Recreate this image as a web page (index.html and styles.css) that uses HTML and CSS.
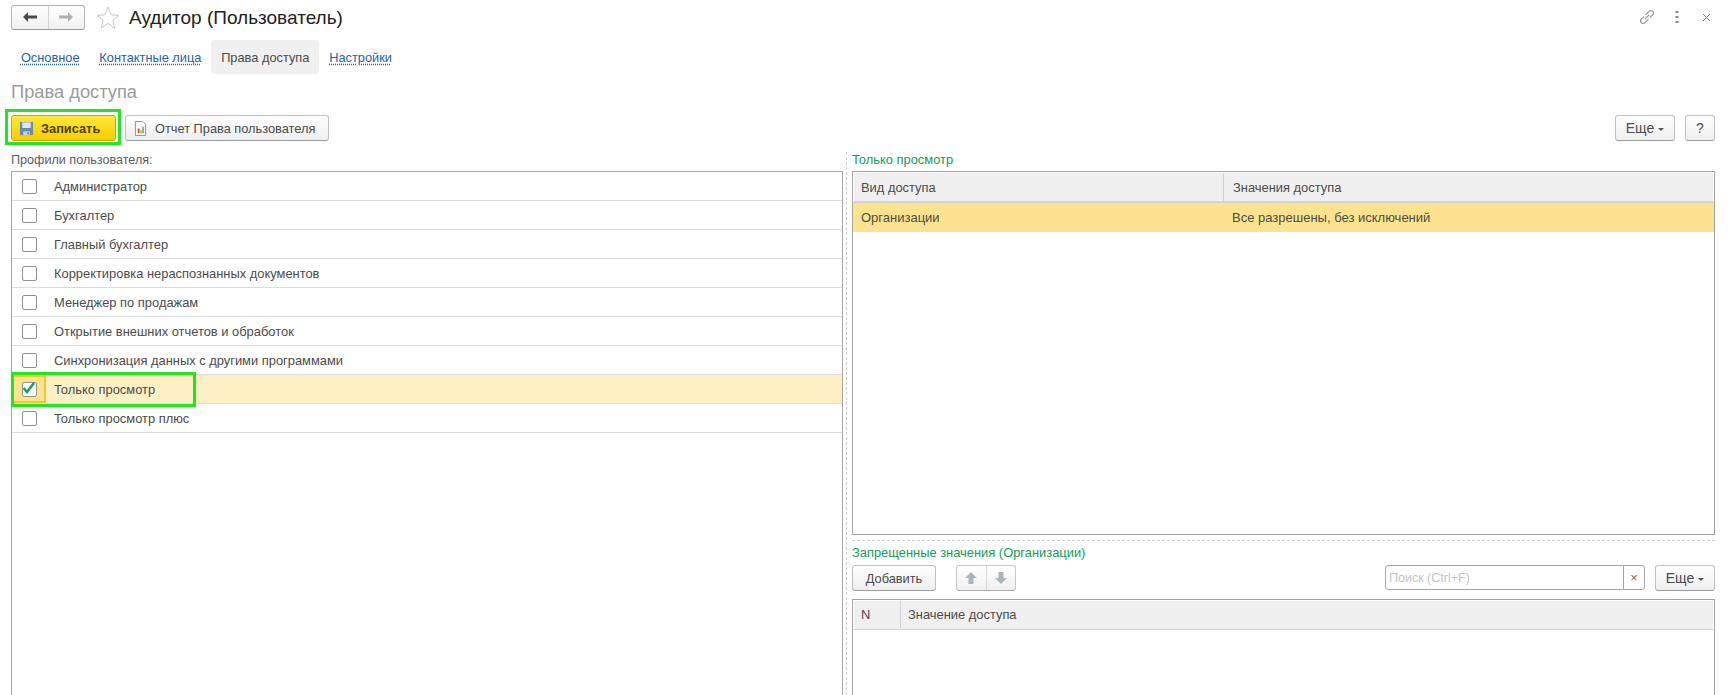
FILE: index.html
```html
<!DOCTYPE html>
<html lang="ru">
<head>
    <meta charset="UTF-8">
    <title>Аудитор (Пользователь)</title>
    <link rel="stylesheet" href="styles.css">
</head>
<body>
    <!-- Title bar -->
    <div class="titlebar">
        <div class="nav-group">
            <button class="nav-btn">
                <svg width="16" height="12" viewBox="0 0 16 12"><path d="M1 6l5-5v3.500h9v3H6V11z" fill="#4a4a4a"/></svg>
            </button>
            <button class="nav-btn">
                <svg width="16" height="12" viewBox="0 0 16 12"><path d="M15 6l-5-5v3.500H1v3h9V11z" fill="#b0b0b0"/></svg>
            </button>
        </div>
        <svg class="star" width="24" height="23" viewBox="0 0 24 23"><path d="M12 1l3 7.800 8 .6-6.200 5.200 2 8L12 17.400 5.200 22l2-8L1 9.400l8-.6z" fill="none" stroke="#c8c8c8"/></svg>
        <h1 class="title">Аудитор (Пользователь)</h1>
        <div class="window-tools">
            <svg width="18" height="18" viewBox="0 0 18 18" fill="none" stroke="#8a8a8a"><g transform="rotate(-45 9 9)"><path d="M7.500 6.500H3.500a2.500 2.500 0 0 0 0 5h5"/><path d="M10.500 11.500h4a2.500 2.500 0 0 0 0-5h-5"/><path d="M6 9h6"/></g></svg>
            <svg width="4" height="14" viewBox="0 0 4 14"><path d="M.5 1h3v2h-3zM.5 6h3v2h-3zM.5 11h3v2h-3z" fill="#8a8a8a"/></svg>
            <svg class="close-icon" width="9" height="9" viewBox="0 0 9 9"><path d="M1 1l7 7M8 1L1 8" stroke="#777"/></svg>
        </div>
    </div>

    <!-- Tabs -->
    <div class="tabs">
        <a class="tab">Основное</a>
        <a class="tab">Контактные лица</a>
        <a class="tab tab-active">Права доступа</a>
        <a class="tab">Настройки</a>
    </div>

    <h2 class="page-heading">Права доступа</h2>

    <!-- Command bar -->
    <div class="toolbar">
        <button class="btn btn-primary annotated">
            <svg width="15" height="15" viewBox="0 0 16 16"><path d="M1 1h14v14H1z" fill="#6b8bab"/><path d="M3.500 1.500h9v6h-9z" fill="#dfe7ef"/><path d="M4.500 11h7v4h-7z" fill="#c9d3dd"/><path d="M9 12h1.500v2.500H9z" fill="#5b7fa6"/></svg>
            Записать
        </button>
        <button class="btn btn-report">
            <svg width="13" height="15" viewBox="0 0 14 16"><path d="M1.500.5h8l3 3v12h-11z" fill="#fff" stroke="#8a8a8a"/><path d="M4 8h2v5H4z" fill="#d9452f"/><path d="M6.500 10h2v3h-2z" fill="#e3b23a"/><path d="M9 6h1.500v7H9z" fill="#4aa04a"/></svg>
            Отчет Права пользователя
        </button>
        <span class="spacer"></span>
        <button class="btn btn-more">Еще <i class="caret"></i></button>
        <button class="btn btn-help">?</button>
    </div>

    <div class="columns">
        <!-- Profiles -->
        <section class="col-left">
            <div class="field-label">Профили пользователя:</div>
            <div class="grid profiles">
                <div class="row"><span class="check"></span>Администратор</div>
                <div class="row"><span class="check"></span>Бухгалтер</div>
                <div class="row"><span class="check"></span>Главный бухгалтер</div>
                <div class="row"><span class="check"></span>Корректировка нераспознанных документов</div>
                <div class="row"><span class="check"></span>Менеджер по продажам</div>
                <div class="row"><span class="check"></span>Открытие внешних отчетов и обработок</div>
                <div class="row"><span class="check"></span>Синхронизация данных с другими программами</div>
                <div class="row row-selected">
                    <span class="check-cell">
                        <span class="check">
                            <svg class="check-mark" width="16" height="14" viewBox="0 0 16 14"><path d="M2.500 7l3.500 4 7-9" fill="none" stroke="#17a05e" stroke-width="2.600"/></svg>
                        </span>
                    </span>
                    Только просмотр
                    <span class="row-frame"></span>
                </div>
                <div class="row"><span class="check"></span>Только просмотр плюс</div>
            </div>
        </section>

        <!-- Access values -->
        <section class="col-right">
            <div class="group-label">Только просмотр</div>
            <div class="grid access">
                <div class="grid-head">
                    <div class="cell cell-kind">Вид доступа</div>
                    <div class="cell cell-value">Значения доступа</div>
                </div>
                <div class="access-row">
                    <div class="cell cell-kind">Организации</div>
                    <div class="cell cell-value">Все разрешены, без исключений</div>
                </div>
            </div>

            <div class="denied">
                <div class="group-label">Запрещенные значения (Организации)</div>
                <div class="denied-bar">
                    <button class="btn btn-add">Добавить</button>
                    <div class="move-group">
                        <button class="move-btn">
                            <svg width="14" height="14" viewBox="0 0 14 14"><path d="M7 1l6 6H9.500v6h-5V7H1z" fill="#a9b4bb"/></svg>
                        </button>
                        <button class="move-btn">
                            <svg width="14" height="14" viewBox="0 0 14 14"><path d="M7 13l6-6H9.500V1h-5v6H1z" fill="#a9b4bb"/></svg>
                        </button>
                    </div>
                    <span class="spacer"></span>
                    <div class="search">
                        <span class="search-text">Поиск (Ctrl+F)</span>
                        <span class="search-clear">×</span>
                    </div>
                    <button class="btn btn-more">Еще <i class="caret"></i></button>
                </div>
                <div class="grid values">
                    <div class="grid-head values-head">
                        <div class="cell cell-n">N</div>
                        <div class="cell cell-name">Значение доступа</div>
                    </div>
                </div>
            </div>
        </section>
    </div>
</body>
</html>
```

FILE: styles.css
```css
* {
    box-sizing: border-box;
}

html, body {
    height: 695px;
}

body {
    margin: 0;
    overflow: hidden;
    background: #fff;
    color: #4b4b4b;
    font-family: 'Liberation Sans', Arial, sans-serif;
    font-size: 12.9px;
}

button {
    font-family: inherit;
    font-size: 12.8px;
    color: #4b4b4b;
    cursor: pointer;
}

.spacer {
    flex: 1;
}

/* Title bar */
.titlebar {
    display: flex;
    align-items: center;
    height: 40px;
    padding: 0 22px 6px 11px;
}

.nav-group {
    display: flex;
    width: 74px;
    height: 25px;
    border: 1px solid #b5b5b5;
    border-bottom-color: #9a9a9a;
    border-radius: 3px;
    background: linear-gradient(#fff, #f0f0f0);
}

.nav-btn {
    flex: 1;
    display: flex;
    align-items: center;
    justify-content: center;
    padding: 0;
    border: none;
    background: none;
}

.nav-btn + .nav-btn {
    border-left: 1px solid #d2d2d2;
}

.star {
    margin-left: 11px;
}

.title {
    margin: 2px 0 0 9px;
    font-size: 19px;
    font-weight: normal;
    color: #222;
}

.window-tools {
    display: flex;
    align-items: center;
    gap: 19px;
    margin-left: auto;
}

.close-icon {
    margin-left: 4px;
}

/* Tabs */
.tabs {
    display: flex;
    height: 34px;
    padding-left: 11px;
    font-size: 12.8px;
}

.tab {
    display: flex;
    align-items: center;
    padding: 1px 9.9px 0;
    border-radius: 3px;
    color: #2a5fa5;
    text-decoration: underline dotted;
    text-underline-offset: 2px;
}

.tab-active {
    background: #f0f0f0;
    color: #4b4b4b;
    text-decoration: none;
}

.page-heading {
    margin: 7px 0 0 11px;
    height: 34px;
    font-size: 18.3px;
    line-height: 22px;
    font-weight: normal;
    color: #9b9b9b;
}

/* Buttons */
.toolbar {
    display: flex;
    align-items: flex-start;
    gap: 9px;
    height: 30px;
    padding: 0 18px 0 11px;
}

.btn {
    display: flex;
    align-items: center;
    justify-content: center;
    height: 26px;
    padding: 0;
    border: 1px solid #c0c0c0;
    border-bottom-color: #9c9c9c;
    border-radius: 3px;
    background: linear-gradient(#fff, #eeeeee);
}

.btn-primary {
    position: relative;
    justify-content: flex-start;
    gap: 7px;
    width: 105px;
    padding-left: 7px;
    border-color: #c9a900;
    background: linear-gradient(#ffe93a, #f6cc00);
    color: #4b3f00;
    font-weight: bold;
}

.annotated::after {
    content: "";
    position: absolute;
    inset: -7px -6px -5px -7px;
    border: 3px solid #1fe81f;
}

.btn-report {
    justify-content: flex-start;
    gap: 8px;
    width: 204px;
    padding-left: 8px;
}

.btn-more {
    gap: 4px;
    width: 60px;
    font-size: 14px;
}

.btn-help {
    width: 30px;
    margin-left: 1px;
    font-size: 14px;
}

.caret {
    width: 0;
    height: 0;
    margin-top: 2px;
    border: 3px solid transparent;
    border-top: 3px solid #555;
    border-bottom: none;
}

/* Columns */
.columns {
    display: flex;
    height: 550px;
    padding: 7px 18px 0 11px;
}

.col-left {
    display: flex;
    flex-direction: column;
    width: 832px;
}

.col-right {
    display: flex;
    flex-direction: column;
    flex: 1;
    margin-left: 3px;
    padding-left: 5px;
    border-left: 1px dashed #cfcfcf;
}

.field-label, .group-label {
    height: 19px;
    line-height: 16px;
}

.field-label {
    color: #5c5c5c;
    font-size: 12.6px;
}

.group-label {
    color: #0f9d58;
}

.grid {
    flex: 1;
    border: 1px solid #a5a5a5;
    border-bottom: none;
}

/* Profile list */
.row {
    position: relative;
    display: flex;
    align-items: center;
    gap: 17px;
    height: 29px;
    padding-left: 10px;
    border-bottom: 1px solid #dcdcdc;
}

.check {
    display: flex;
    align-items: center;
    justify-content: center;
    width: 15px;
    height: 15px;
    border: 1px solid #8f8f8f;
    border-radius: 2px;
    background: #fff;
}

.check-mark {
    flex: none;
    margin-top: -3px;
    overflow: visible;
}

.row-selected {
    padding-left: 0;
    background: #fdf0c4;
}

.check-cell {
    display: flex;
    align-items: center;
    justify-content: center;
    width: 34px;
    height: 28px;
    margin-right: -9px;
    border: 2px solid #f6c52e;
    background: #ffe490;
}

.row-frame {
    position: absolute;
    left: -1px;
    top: -3px;
    width: 185px;
    height: 35px;
    border: 3px solid #1fe81f;
}

/* Right side */
.access {
    flex: 1;
    border-bottom: 1px solid #a5a5a5;
}

.grid-head {
    display: flex;
    height: 31px;
    border: 1px solid #fff;
    border-bottom: 2px solid #d2d2d2;
    background: #f0f0f0;
}

.cell {
    display: flex;
    align-items: center;
    padding-left: 7px;
}

.cell-kind {
    width: 369px;
}

.grid-head .cell-value {
    padding-left: 9px;
}

.grid-head .cell + .cell {
    border-left: 1px solid #d2d2d2;
}

.access-row {
    display: flex;
    height: 29px;
    background: #fde38d;
    font-size: 13px;
}

.access-row .cell {
    padding-left: 8px;
}

.access-row .cell-kind {
    width: 371px;
}

.denied {
    display: flex;
    flex-direction: column;
    height: 155px;
    margin-top: 5px;
    padding-top: 4px;
    border-top: 1px dashed #cfcfcf;
}

.denied .group-label {
    height: 20px;
}

.denied-bar {
    display: flex;
    align-items: flex-start;
    height: 34px;
}

.btn-add {
    width: 84px;
}

.move-group {
    display: flex;
    width: 60px;
    height: 26px;
    margin-left: 20px;
    border: 1px solid #c8c8c8;
    border-bottom-color: #aaaaaa;
    border-radius: 3px;
    background: linear-gradient(#fff, #f0f0f0);
}

.move-btn {
    flex: 1;
    display: flex;
    align-items: center;
    justify-content: center;
    padding: 0;
    border: none;
    background: none;
}

.move-btn + .move-btn {
    border-left: 1px solid #d8d8d8;
}

.search {
    display: flex;
    align-items: center;
    width: 260px;
    height: 25px;
    margin-right: 10px;
    border: 1px solid #a5a5a5;
    border-radius: 3px;
}

.search-text {
    flex: 1;
    padding-left: 3px;
    color: #c4c4c4;
    font-size: 12.5px;
}

.search-clear {
    display: flex;
    align-items: center;
    justify-content: center;
    width: 21px;
    height: 100%;
    border-left: 1px solid #a5a5a5;
    color: #666;
}

.values-head {
    height: 30px;
    padding-bottom: 1px;
    border-bottom: 1px solid #d2d2d2;
}

.cell-n {
    width: 46px;
}
```
